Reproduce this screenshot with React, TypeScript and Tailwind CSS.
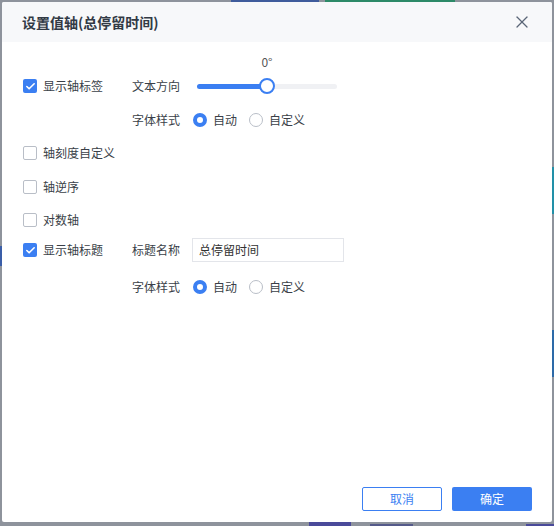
import { X, Check } from 'lucide-react';

const Checkbox = ({ checked, label }: { checked?: boolean; label: string }) => (
    <div className="flex items-center w-[109px] shrink-0">
        <span
            className={`w-[14px] h-[14px] rounded-[2px] flex items-center justify-center ${checked ? 'bg-[#3b7ff2]' : 'border border-[#b9bec7] bg-white'}`}
        >
            {checked && <Check size={11} strokeWidth={3.5} className="text-white" />}
        </span>
        <span className="ml-[6px]">{label}</span>
    </div>
);

const Radio = ({ checked, label }: { checked?: boolean; label: string }) => (
    <div className="flex items-center">
        <span
            className={`w-[14px] h-[14px] rounded-full bg-white ${checked ? 'border-[4px] border-[#3b7ff2]' : 'border border-[#b9bec7]'}`}
        />
        <span className="ml-[6px]">{label}</span>
    </div>
);

const FontStyle = () => (
    <div className="flex items-center">
        <span className="w-[48px]">字体样式</span>
        <div className="ml-[13px] flex items-center gap-[12px]">
            <Radio checked label="自动" />
            <Radio label="自定义" />
        </div>
    </div>
);

const App = () => {
    return (
        <div
            className="relative w-[554px] h-[526px] bg-[#8e939c] p-[2px] overflow-hidden"
            style={{ fontFamily: '"Noto Sans CJK SC", "Noto Sans", sans-serif' }}
        >
            {/* dimmed page behind the dialog */}
            <div className="absolute left-[231px] top-0 w-[88px] h-[2px] bg-[#3f5c9c]" />
            <div className="absolute left-[325px] top-0 w-[130px] h-[2px] bg-[#2d8a68]" />
            <div className="absolute left-[309px] bottom-0 w-[42px] h-[4px] bg-[#4a4a9a]" />
            <div className="absolute left-[370px] bottom-0 w-[43px] h-[2px] bg-[#555a8a]" />
            <div className="absolute right-0 bottom-0 w-[28px] h-[2px] bg-[#4a4a9a]" />
            <div className="absolute right-0 top-[167px] w-[2px] h-[47px] bg-[#2290a8]" />
            <div className="absolute right-0 top-[330px] w-[2px] h-[47px] bg-[#2d6aa8]" />
            <div className="absolute left-0 top-[246px] w-[2px] h-[20px] bg-[#3a5ea8]" />

            <div className="relative flex flex-col h-[520px] bg-white rounded-[2px] overflow-hidden text-[12px] text-[#3a3f48]">
                <header className="h-[40px] shrink-0 bg-[#f7f8fa] flex items-center justify-between pl-[20px] pr-[20px]">
                    <h1 className="text-[14px] font-semibold text-[#323a45]">设置值轴(总停留时间)</h1>
                    <X size={20} strokeWidth={1.5} className="text-[#5a6577]" />
                </header>

                <div className="flex-1 pl-[21px] pt-[27px]">
                    <div className="flex items-center h-[34px]">
                        <Checkbox checked label="显示轴标签" />
                        <span className="w-[48px]">文本方向</span>
                        <div className="relative ml-[17px] w-[140px] h-[5px] rounded-full bg-[#f0f1f4]">
                            <div className="absolute left-0 top-0 h-full w-1/2 rounded-full bg-[#3b7ff2]" />
                            <div className="absolute left-1/2 top-1/2 -translate-x-1/2 -translate-y-1/2 w-[16px] h-[16px] rounded-full bg-white border-[2px] border-[#3b7ff2]" />
                            <span className="absolute left-1/2 -translate-x-1/2 -top-[31px] text-[#555]">0°</span>
                        </div>
                    </div>
                    <div className="flex items-center h-[33px] pl-[109px]">
                        <FontStyle />
                    </div>
                    <div className="flex items-center h-[34px]">
                        <Checkbox label="轴刻度自定义" />
                    </div>
                    <div className="flex items-center h-[34px]">
                        <Checkbox label="轴逆序" />
                    </div>
                    <div className="flex items-center h-[32px]">
                        <Checkbox label="对数轴" />
                    </div>
                    <div className="flex items-center h-[28px]">
                        <Checkbox checked label="显示轴标题" />
                        <span className="w-[48px]">标题名称</span>
                        <div className="ml-[12px] w-[152px] h-[24px] border border-[#e3e5ea] flex items-center px-[6px] text-[#333]">
                            总停留时间
                        </div>
                    </div>
                    <div className="flex items-center h-[34px] mt-[6px] pl-[109px]">
                        <FontStyle />
                    </div>
                </div>

                <footer className="flex justify-end gap-[10px] pr-[20px] pb-[11px]">
                    <button className="w-[80px] h-[24px] rounded-[2px] border border-[#3b7ff2] text-[#3b7ff2] bg-white">
                        取消
                    </button>
                    <button className="w-[80px] h-[24px] rounded-[2px] bg-[#3b7ff2] text-white">
                        确定
                    </button>
                </footer>
            </div>
        </div>
    );
};

export default App;
